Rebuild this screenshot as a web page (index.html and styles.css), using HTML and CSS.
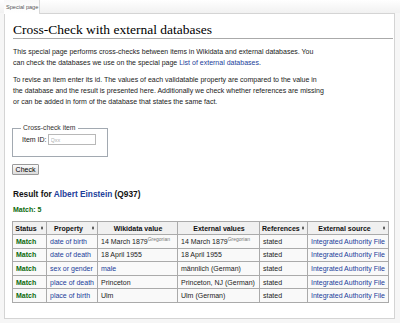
FILE: index.html
```html
<!DOCTYPE html>
<html>
<head>
<meta charset="utf-8">
<link rel="stylesheet" href="styles.css">
</head>
<body>
<div class="tabs"><div class="tab">Special page</div></div>
<div class="content">
  <h1 class="title">Cross-Check with external databases</h1>
  <p class="para">This special page performs cross-checks between items in Wikidata and external databases. You<br>can check the databases we use on the special page <a class="link" href="#">List of external databases</a>.</p>
  <p class="para">To revise an item enter its id. The values of each validatable property are compared to the value in<br>the database and the result is presented here. Additionally we check whether references are missing<br>or can be added in form of the database that states the same fact.</p>
  <fieldset class="box">
    <legend class="legend">Cross-check item</legend>
    <div class="field"><label class="label">Item ID:</label><input class="input" placeholder="Qxx"></div>
  </fieldset>
  <button class="btn">Check</button>
  <h3 class="result">Result for <a class="link" href="#">Albert Einstein</a> (Q937)</h3>
  <div class="count">Match: 5</div>
  <table class="grid">
    <colgroup><col class="c1"><col class="c2"><col class="c3"><col class="c4"><col class="c5"><col class="c6"></colgroup>
    <thead>
      <tr>
        <th class="sortable">Status<span class="arrow"></span></th>
        <th class="sortable">Property<span class="arrow"></span></th>
        <th>Wikidata value</th>
        <th>External values</th>
        <th class="sortable">References<span class="arrow"></span></th>
        <th class="sortable">External source<span class="arrow"></span></th>
      </tr>
    </thead>
    <tbody>
      <tr><td class="ok">Match</td><td><a class="link" href="#">date of birth</a></td><td>14 March 1879<sup class="cal">Gregorian</sup></td><td>14 March 1879<sup class="cal">Gregorian</sup></td><td>stated</td><td><a class="link" href="#">Integrated Authority File</a></td></tr>
      <tr><td class="ok">Match</td><td><a class="link" href="#">date of death</a></td><td>18 April 1955</td><td>18 April 1955</td><td>stated</td><td><a class="link" href="#">Integrated Authority File</a></td></tr>
      <tr><td class="ok">Match</td><td><a class="link" href="#">sex or gender</a></td><td><a class="link" href="#">male</a></td><td>männlich (German)</td><td>stated</td><td><a class="link" href="#">Integrated Authority File</a></td></tr>
      <tr><td class="ok">Match</td><td><a class="link" href="#">place of death</a></td><td>Princeton</td><td>Princeton, NJ (German)</td><td>stated</td><td><a class="link" href="#">Integrated Authority File</a></td></tr>
      <tr><td class="ok">Match</td><td><a class="link" href="#">place of birth</a></td><td>Ulm</td><td>Ulm (German)</td><td>stated</td><td><a class="link" href="#">Integrated Authority File</a></td></tr>
    </tbody>
  </table>
</div>
</body>
</html>
```
FILE: styles.css
```css
html, body { margin: 0; padding: 0; }
body {
  background: #f6f6f6;
  font-family: "Liberation Sans", Arial, sans-serif;
  color: #222;
  width: 400px;
  height: 323px;
  overflow: hidden;
}
.tabs {
  height: 13px;
  padding-left: 4px;
  display: flex;
  background: linear-gradient(#ffffff, #f1f1f1);
}
.tab {
  width: 36px;
  height: 14px;
  box-sizing: border-box;
  background: linear-gradient(#f8f8f8, #ffffff);
  border-right: 1px solid #d8d8d8;
  font-size: 5.6px;
  color: #555;
  padding: 4px 0 0 2px;
  position: relative;
  z-index: 1;
}
.content {
  margin-left: 4px;
  width: 391px;
  height: 306px;
  box-sizing: border-box;
  border: 1px solid #d4d4d4;
  background: #fff;
  padding: 7px 0 0 8px;
}
.title {
  font-family: "Liberation Serif", "Times New Roman", serif;
  font-weight: normal;
  font-size: 13.5px;
  line-height: 17px;
  margin: 0 1px 0 0;
  border-bottom: 1px solid #aaaaaa;
  color: #000;
}
.para {
  font-size: 7px;
  line-height: 11px;
  margin: 7px 0 0;
  white-space: nowrap;
}
.para + .para { margin-top: 6px; }
.link { color: #22409a; text-decoration: none; }
.box {
  margin: 17px 0 0 -1px;
  width: 96px;
  height: 33px;
  box-sizing: border-box;
  border: 1px solid #a2a9b1;
  padding: 0 0 0 9px;
}
.legend {
  font-size: 6.8px;
  line-height: 8px;
  padding: 0 2px;
  margin-left: -1px;
  color: #333;
}
.field {
  display: flex;
  align-items: center;
  gap: 1px;
  margin-top: 2px;
}
.label { font-size: 7px; }
.input {
  width: 48px;
  height: 11px;
  box-sizing: border-box;
  border: 1px solid #b8b8b8;
  padding: 0 2px;
  font-size: 5.5px;
  font-family: "Liberation Sans", Arial, sans-serif;
}
.input::placeholder { color: #b0b0b0; }
.btn {
  display: block;
  margin: 7px 0 0 -1px;
  width: 27px;
  height: 11px;
  padding: 0;
  font-size: 7px;
  font-family: "Liberation Sans", Arial, sans-serif;
  border: 1px solid #9a9a9a;
  border-radius: 1px;
  background: linear-gradient(#fbfbfb, #dcdcdc);
  color: #000;
}
.result {
  font-size: 8.3px;
  line-height: 11px;
  margin: 14px 0 0;
  font-weight: bold;
  color: #111;
}
.count {
  font-size: 7px;
  line-height: 11px;
  margin-top: 4px;
  font-weight: bold;
  color: #0b6a0b;
}
.grid {
  margin: 6px 0 0 -1px;
  width: 376px;
  table-layout: fixed;
  border-collapse: collapse;
  font-size: 7px;
  background: #f9f9f9;
}
.c1 { width: 34px; }
.c2 { width: 51px; }
.c3 { width: 80px; }
.c4 { width: 82px; }
.c5 { width: 48px; }
.c6 { width: 81px; }
.grid th, .grid td {
  border: 1px solid #aaaaaa;
  padding: 0 2px 0 3px;
  white-space: nowrap;
  overflow: hidden;
}
.grid th {
  background: #f0f0f0;
  height: 12px;
  text-align: center;
  font-weight: bold;
  color: #111;
}
.grid th.sortable {
  padding: 0 9px 0 2px;
  position: relative;
}
.grid td { height: 12.6px; }
.arrow {
  position: absolute;
  right: 3px;
  top: 50%;
  margin-top: -2px;
  width: 0;
  height: 0;
  border-left: 1.5px solid transparent;
  border-right: 1.5px solid transparent;
  border-bottom: 2px solid #333;
}
.arrow::after {
  content: "";
  position: absolute;
  left: -1.5px;
  top: 2px;
  border-left: 1.5px solid transparent;
  border-right: 1.5px solid transparent;
  border-top: 2px solid #333;
}
.ok { font-weight: bold; color: #0b6a0b; }
.cal { font-size: 5px; color: #777; vertical-align: 3px; line-height: 0; }
```
